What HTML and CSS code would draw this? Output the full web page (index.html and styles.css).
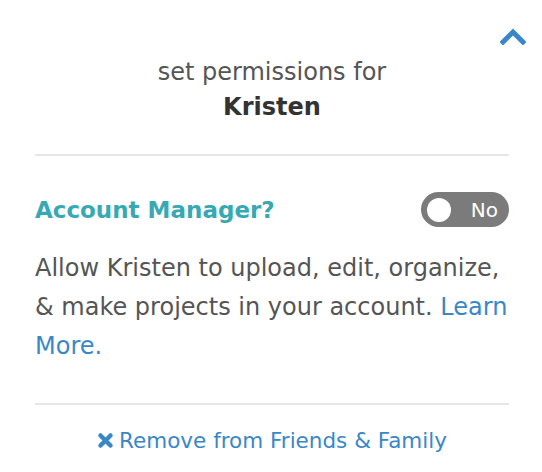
FILE: index.html
```html
<!DOCTYPE html>
<html>
<head>
<meta charset="utf-8">
<link rel="stylesheet" href="styles.css">
</head>
<body>
<div class="panel">
  <div class="top">
    <svg class="chevron" width="26" height="18" viewBox="0 0 26 18"><path d="M3 15 L13 5 L23 15" fill="none" stroke="#3a87c8" stroke-width="5" stroke-linecap="square"/></svg>
  </div>
  <div class="heading">
    <div class="sub">set permissions for</div>
    <div class="name">Kristen</div>
  </div>
  <div class="section">
    <div class="row">
      <div class="label">Account Manager?</div>
      <div class="toggle"><span class="knob"></span><span class="state">No</span></div>
    </div>
    <p class="desc">Allow Kristen to upload, edit, organize, &amp; make projects in your account. <a class="link" href="#">Learn More.</a></p>
  </div>
  <div class="footer">
    <a class="remove" href="#"><svg class="x" width="17" height="17" viewBox="0 0 17 17"><path d="M3.5 3.5 L13.5 13.5 M13.5 3.5 L3.5 13.5" stroke="#3a87c8" stroke-width="4.5" stroke-linecap="round"/></svg>Remove from Friends &amp; Family</a>
  </div>
</div>
</body>
</html>
```
FILE: styles.css
```css
html, body { margin: 0; padding: 0; background: #fff; }
body { font-family: "DejaVu Sans", "Liberation Sans", sans-serif; color: #555; }
.panel { width: 542px; height: 472px; box-sizing: border-box; padding: 0 33px 0 35px; }
.top { display: flex; justify-content: flex-end; margin-right: -17px; padding-top: 27px; height: 18px; }
.chevron { display: block; }
.heading { text-align: center; padding-top: 12px; padding-bottom: 32px; border-bottom: 2px solid #e6e6e6; }
.sub { font-size: 24px; line-height: 30px; color: #555; }
.name { font-size: 24px; line-height: 30px; font-weight: 700; color: #333; margin-top: 5px; }
.section { padding-top: 36px; padding-bottom: 37px; border-bottom: 2px solid #e6e6e6; }
.row { display: flex; justify-content: space-between; align-items: center; }
.label { font-size: 23px; font-weight: 700; color: #38a9b4; }
.toggle { width: 88px; height: 35px; border-radius: 18px; background: #7b7b7b; display: flex; align-items: center; box-sizing: border-box; padding: 0 11px 0 6px; justify-content: space-between; }
.knob { width: 24px; height: 24px; border-radius: 50%; background: #fff; }
.state { color: #fff; font-size: 20px; }
.desc { margin: 22px 0 0; font-size: 24px; line-height: 39px; color: #555; }
.link { color: #3a87c8; text-decoration: none; }
.footer { text-align: center; padding-top: 23px; }
.remove { color: #3a87c8; text-decoration: none; font-size: 21.5px; display: inline-flex; align-items: center; gap: 5px; }
.x { display: block; }
```
